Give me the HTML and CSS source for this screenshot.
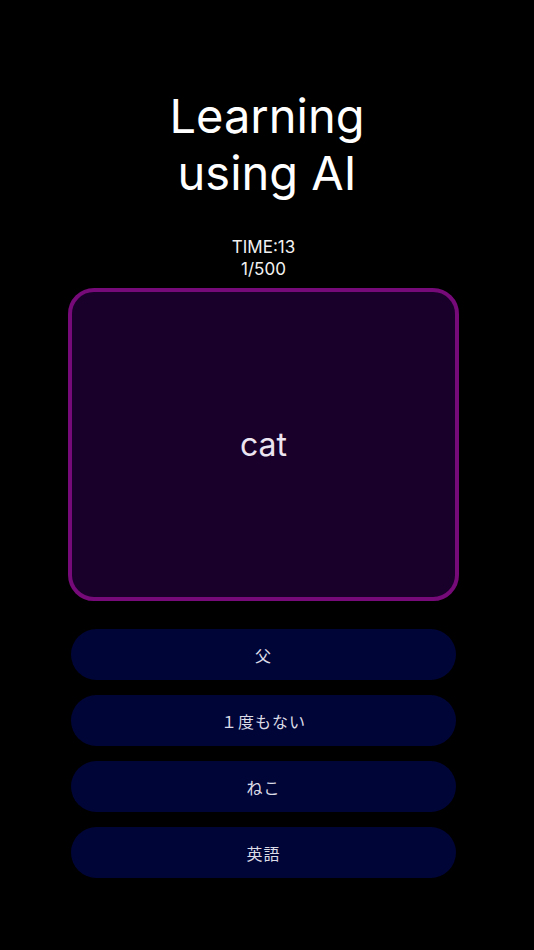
FILE: index.html
```html
<!DOCTYPE html>
<html lang="ja">
<head>
  <meta charset="UTF-8" />
  <meta name="viewport" content="width=device-width, initial-scale=1" />
  <title>Learning using AI</title>
  <link rel="stylesheet" href="styles.css">
</head>
<body>
  <div class="app">
    <h1 class="title">Learning<br>using AI</h1>

    <div class="quiz">
      <div class="stats">
        <div class="stat-time">TIME:13</div>
        <div class="stat-count">1/500</div>
      </div>

      <div class="word-card">
        <span class="word">cat</span>
      </div>

      <div class="choices">
        <button class="choice">父</button>
        <button class="choice">１度もない</button>
        <button class="choice">ねこ</button>
        <button class="choice">英語</button>
      </div>
    </div>
  </div>
</body>
</html>
```

FILE: styles.css
```css
html, body {
  margin: 0;
  padding: 0;
  background-color: #000000;
  color: #ffffff;
  font-family: Inter, 'Noto Sans', 'Noto Sans CJK JP', sans-serif;
  height: 100vh;
  width: 100vw;
  overflow: hidden;
}

.app {
  display: flex;
  flex-direction: column;
  align-items: center;
}

.title {
  margin: 87px 0 0;
  font-size: 47px;
  font-weight: 400;
  line-height: 57px;
  text-align: center;
}

.quiz {
  align-self: flex-start;
  margin-left: 68px;
  width: 391px;
  display: flex;
  flex-direction: column;
  align-items: center;
}

.stats {
  margin-top: 35px;
  font-size: 17px;
  line-height: 22px;
  text-align: center;
  color: #f2f2f2;
}

.word-card {
  margin-top: 8px;
  box-sizing: border-box;
  width: 391px;
  height: 313px;
  border: 4px solid #750a78;
  border-radius: 26px;
  background-color: #19002a;
  display: flex;
  align-items: center;
  justify-content: center;
}

.word {
  font-size: 32px;
  color: #ece4f0;
}

.choices {
  margin-top: 28px;
  display: flex;
  flex-direction: column;
  gap: 15px;
}

.choice {
  width: 385px;
  height: 51px;
  border: none;
  border-radius: 26px;
  background-color: #000538;
  color: #dcdce6;
  font-family: Inter, 'Noto Sans CJK JP', sans-serif;
  font-size: 16px;
  letter-spacing: 1px;
  padding: 0;
}
```
